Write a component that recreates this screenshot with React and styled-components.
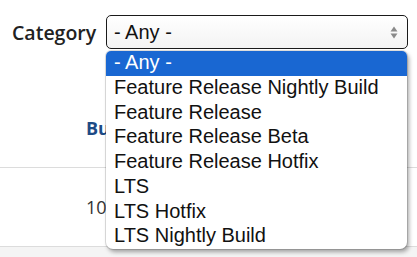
import styled, { createGlobalStyle } from 'styled-components';

const GlobalStyle = createGlobalStyle`
  body {
    margin: 0;
    background: #ffffff;
    font-family: "Liberation Sans", Arial, sans-serif;
  }
`;

const Page = styled.div`
  width: 417px;
  height: 257px;
  overflow: hidden;
  background: #ffffff;
`;

const FilterRow = styled.div`
  display: flex;
  align-items: center;
  gap: 9px;
  padding: 15px 0 0 12px;
`;

const Label = styled.label`
  width: 85px;
  font-family: "Open Sans", sans-serif;
  font-size: 19.5px;
  font-weight: 600;
  color: #222222;
  white-space: nowrap;
`;

const SelectWrap = styled.div`
  position: relative;
  width: 302px;
`;

const SelectBox = styled.div`
  height: 34px;
  box-sizing: border-box;
  border: 1px solid #1a1a1a;
  border-radius: 5px;
  background: linear-gradient(#ffffff, #f3f3f3);
  display: flex;
  align-items: center;
  justify-content: space-between;
  padding: 0 9px 0 7px;
  font-size: 20px;
  color: #111111;
`;

const Dropdown = styled.ul`
  position: absolute;
  z-index: 5;
  top: 36px;
  left: 0;
  width: 301px;
  margin: 0;
  padding: 0;
  list-style: none;
  background: #ffffff;
  border-radius: 5px 5px 7px 7px;
  overflow: hidden;
  box-shadow: 0 0 0 1px rgba(0, 0, 0, 0.12), 2px 3px 4px rgba(0, 0, 0, 0.35);
`;

const Option = styled.li`
  height: 24.75px;
  line-height: 23px;
  padding-left: 8px;
  font-size: 20px;
  white-space: nowrap;
  color: ${p => (p.$active ? '#ffffff' : '#111111')};
  background: ${p => (p.$active ? '#1967d2' : 'transparent')};
`;

const Table = styled.div`
  margin-top: 40px;
  font-family: "Open Sans", sans-serif;
  font-size: 18px;
`;

const Row = styled.div`
  height: 78px;
  display: flex;
  align-items: center;
  padding-left: 86px;
  border-bottom: 1px solid #dcdcdc;
`;

const HeadCell = styled.span`
  font-weight: 700;
  color: #1d4b86;
`;

const Cell = styled.span`
  color: #333333;
`;

const Footer = styled.div`
  height: 20px;
  background: #f4f4f4;
`;

const Arrows = () => (
  <svg width="8" height="13" viewBox="0 0 8 13">
    <path d="M4 0.5 L7.5 5.5 H0.5 Z" fill="#8a8a8a" />
    <path d="M4 12.5 L7.5 7.5 H0.5 Z" fill="#8a8a8a" />
  </svg>
);

const options = [
  '- Any -',
  'Feature Release Nightly Build',
  'Feature Release',
  'Feature Release Beta',
  'Feature Release Hotfix',
  'LTS',
  'LTS Hotfix',
  'LTS Nightly Build',
];

export default function App() {
  return (
    <Page>
      <GlobalStyle />
      <FilterRow>
        <Label>Category</Label>
        <SelectWrap>
          <SelectBox>
            <span>- Any -</span>
            <Arrows />
          </SelectBox>
          <Dropdown>
            {options.map((o, i) => (
              <Option key={o} $active={i === 0}>{o}</Option>
            ))}
          </Dropdown>
        </SelectWrap>
      </FilterRow>
      <Table>
        <Row><HeadCell>Build</HeadCell></Row>
        <Row><Cell>10.0</Cell></Row>
        <Footer />
      </Table>
    </Page>
  );
}
